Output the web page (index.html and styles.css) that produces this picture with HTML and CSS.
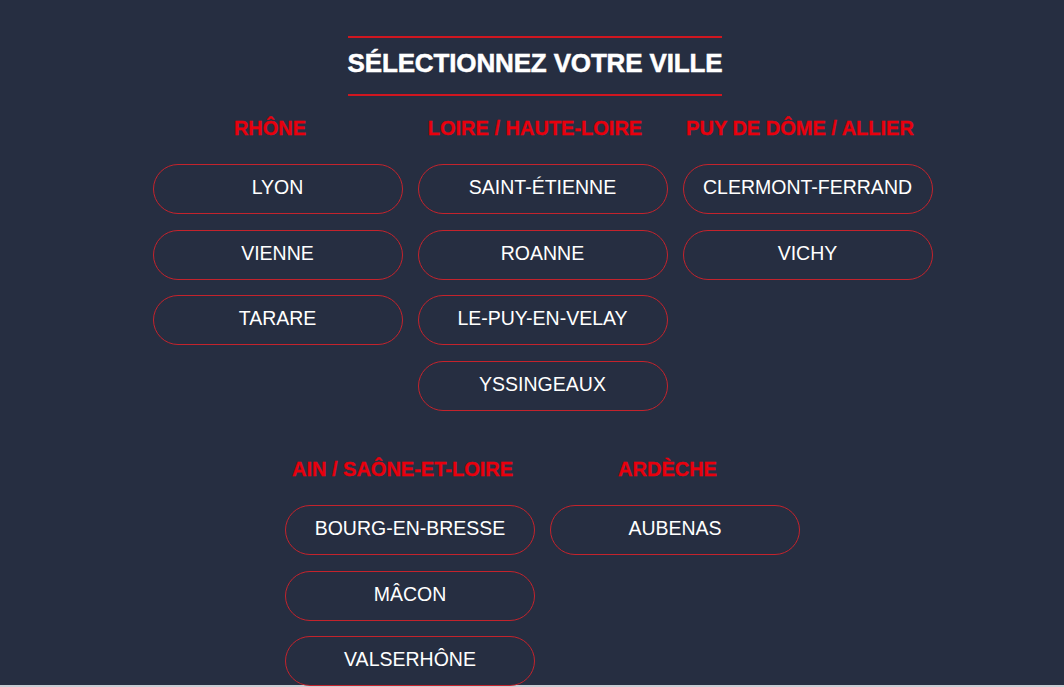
FILE: index.html
```html
<!DOCTYPE html>
<html lang="fr">
<head>
    <meta charset="UTF-8">
    <meta name="viewport" content="width=device-width, initial-scale=1.0">
    <title>Sélectionnez votre ville</title>
    <link rel="stylesheet" href="styles.css">
</head>
<body>
    <div class="cities">
        <div class="title-wrap">
            <h1 class="title">SÉLECTIONNEZ VOTRE VILLE</h1>
        </div>

        <div class="region-row">
            <div class="region">
                <h2>RHÔNE</h2>
                <a href="#" class="city">LYON</a>
                <a href="#" class="city">VIENNE</a>
                <a href="#" class="city">TARARE</a>
            </div>
            <div class="region">
                <h2>LOIRE / HAUTE-LOIRE</h2>
                <a href="#" class="city">SAINT-ÉTIENNE</a>
                <a href="#" class="city">ROANNE</a>
                <a href="#" class="city">LE-PUY-EN-VELAY</a>
                <a href="#" class="city">YSSINGEAUX</a>
            </div>
            <div class="region">
                <h2>PUY DE DÔME / ALLIER</h2>
                <a href="#" class="city">CLERMONT-FERRAND</a>
                <a href="#" class="city">VICHY</a>
            </div>
        </div>

        <div class="region-row second">
            <div class="region">
                <h2>AIN / SAÔNE-ET-LOIRE</h2>
                <a href="#" class="city">BOURG-EN-BRESSE</a>
                <a href="#" class="city">MÂCON</a>
                <a href="#" class="city">VALSERHÔNE</a>
            </div>
            <div class="region">
                <h2>ARDÈCHE</h2>
                <a href="#" class="city">AUBENAS</a>
            </div>
        </div>
    </div>
    <div class="next-section"></div>
</body>
</html>
```

FILE: styles.css
```css
body {
    margin: 0;
    background-color: #262e41;
    font-family: "Liberation Sans", Arial, sans-serif;
    overflow: hidden;
}
.cities {
    height: 685px;
    box-sizing: border-box;
    padding: 36px 0 0 6px;
}
.title-wrap {
    text-align: center;
}
.title {
    display: inline-block;
    margin: 0;
    padding: 10px 0 16px;
    border-top: 2px solid #d0161f;
    border-bottom: 2px solid #d0161f;
    color: #ffffff;
    font-size: 26px;
    line-height: 30px;
    font-weight: bold;
    letter-spacing: -0.15px;
    -webkit-text-stroke: 0.5px #ffffff;
}
.region-row {
    display: flex;
    justify-content: center;
    align-items: flex-start;
    margin-top: 20px;
}
.region-row.second {
    margin-top: 46px;
}
.region {
    width: 265px;
    display: flex;
    flex-direction: column;
}
.region h2 {
    margin: 0 0 24px;
    color: #e8000d;
    font-size: 20px;
    line-height: 24px;
    font-weight: bold;
    text-align: center;
    white-space: nowrap;
    -webkit-text-stroke: 0.3px #e8000d;
}
.city {
    display: flex;
    align-items: center;
    justify-content: center;
    box-sizing: border-box;
    width: 250px;
    height: 50px;
    margin: 0 0 15.7px 15px;
    padding-bottom: 3px;
    border: 1px solid #c4232c;
    border-radius: 25px;
    color: #ffffff;
    font-size: 19.5px;
    text-decoration: none;
}
.city:last-child {
    margin-bottom: 0;
}
.next-section {
    height: 10px;
    background-color: #c9cdd3;
}
```
